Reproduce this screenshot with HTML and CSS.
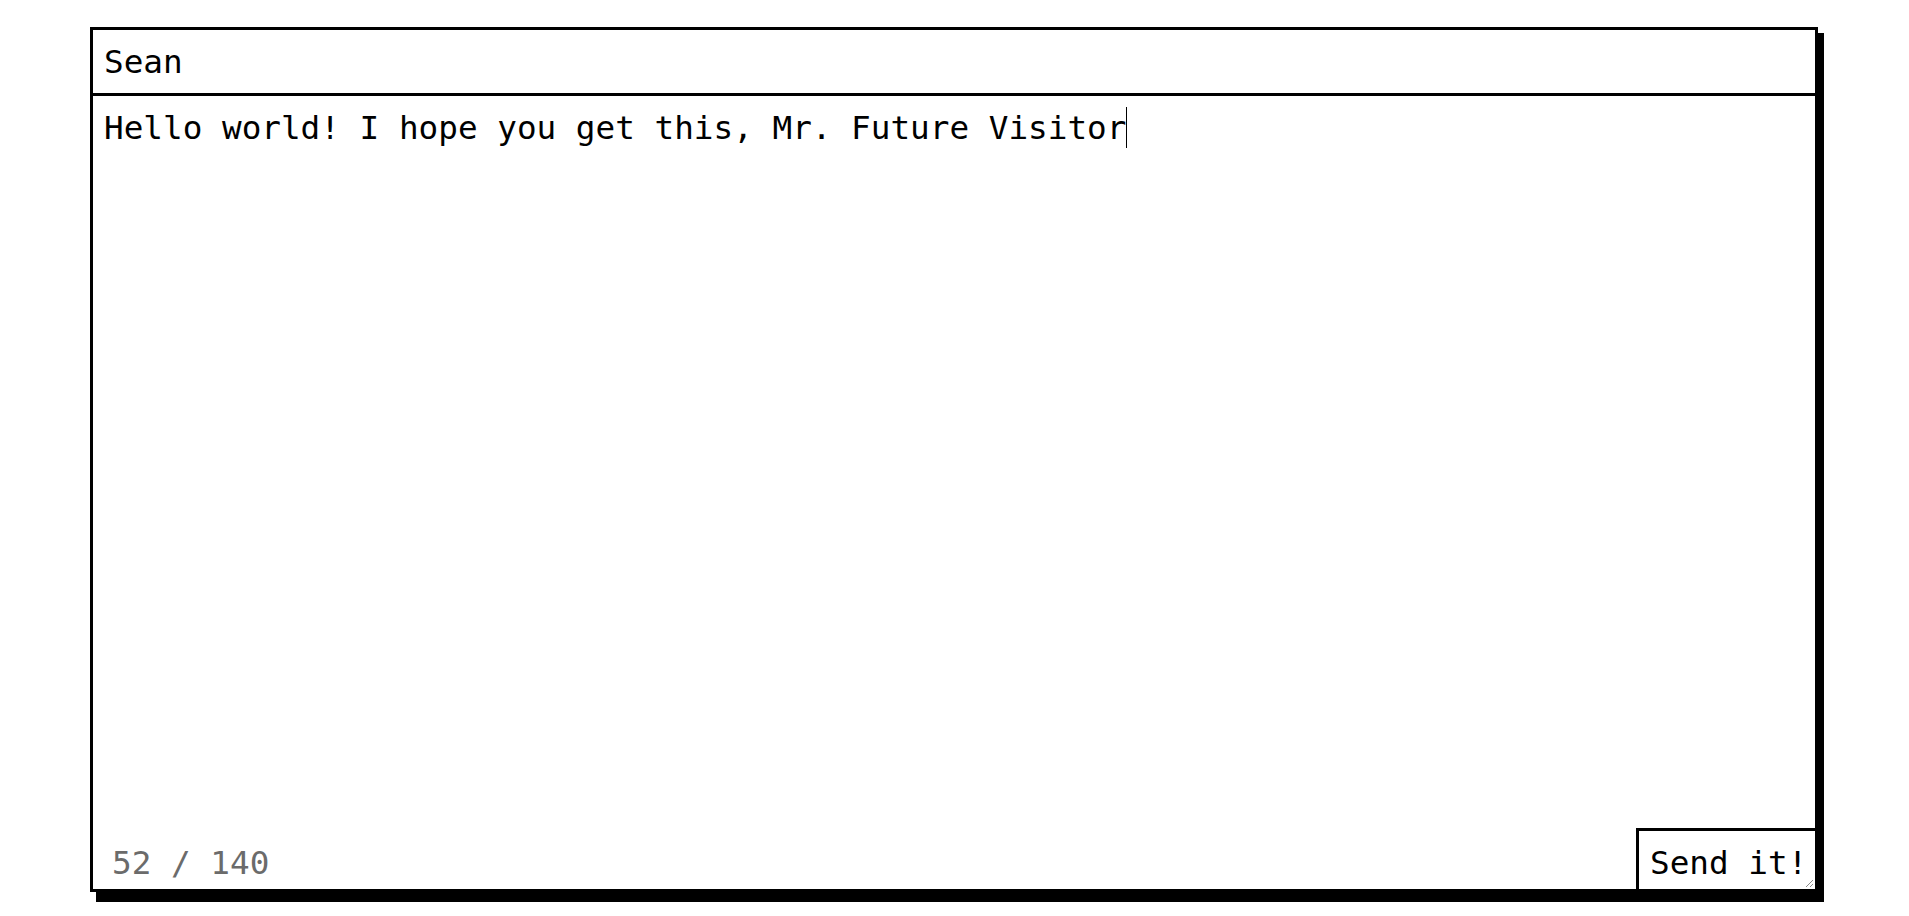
FILE: index.html
```html
<!DOCTYPE html>
<html lang="en">
<head>
<meta charset="utf-8">
<title>Message</title>
<link rel="stylesheet" href="styles.css">
</head>
<body>
<form class="card">
  <div class="name">Sean</div>
  <div class="message">
    <div class="body-text">Hello world! I hope you get this, Mr. Future Visitor<span class="caret"></span></div>
    <div class="footer">
      <span class="count">52 / 140</span>
      <button type="button" class="send">Send it!</button>
    </div>
    <svg class="grip" width="10" height="10" viewBox="0 0 10 10"><path d="M9 2 L2 9 M9 6 L6 9" stroke="#8a8a8a" stroke-width="1" fill="none"/></svg>
  </div>
</form>
</body>
</html>
```

FILE: styles.css
```css
html, body {
  margin: 0;
  padding: 0;
  background: #fff;
}

body {
  font-family: "DejaVu Sans Mono", "Liberation Mono", monospace;
  font-size: 32.66px;
  line-height: 38px;
  color: #000;
  padding: 27px 0 24px 90px;
}

.card {
  box-sizing: border-box;
  width: 1728px;
  height: 865px;
  border: 3px solid #000;
  box-shadow: 6px 6px 0 #000, 6px 10px 0 #000;
  display: flex;
  flex-direction: column;
  background: #fff;
}

.name {
  box-sizing: border-box;
  height: 66px;
  padding: 13px 11px 0;
  border-bottom: 3px solid #000;
}

.message {
  position: relative;
  flex: 1;
  display: flex;
  flex-direction: column;
}

.body-text {
  padding: 13px 11px 0;
  white-space: pre;
}

.caret {
  display: inline-block;
  width: 1px;
  height: 41px;
  margin-top: -5px;
  background: #000;
  vertical-align: -9px;
}

.footer {
  margin-top: auto;
  display: flex;
  align-items: baseline;
  justify-content: space-between;
}

.count {
  padding-left: 19px;
  color: #6b6b6b;
}

.send {
  box-sizing: border-box;
  height: 61px;
  width: 179px;
  margin: 0;
  padding: 6px 0 0 11px;
  border: 0;
  border-top: 3px solid #000;
  border-left: 3px solid #000;
  border-radius: 0;
  background: #fff;
  color: #000;
  font: inherit;
  line-height: 38px;
  text-align: left;
  vertical-align: top;
}

.grip {
  position: absolute;
  right: 1px;
  bottom: 1px;
}
```
